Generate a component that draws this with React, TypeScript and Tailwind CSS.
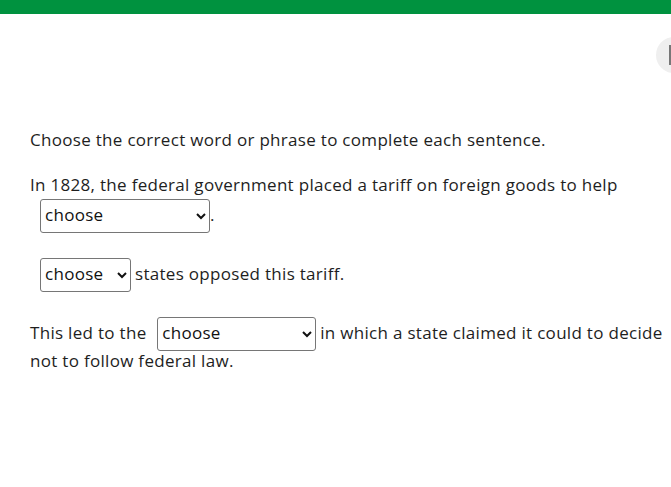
import React from 'react';

const selectClass =
    "inline-block h-[34px] border border-[#767676] rounded-[3px] bg-white pl-0 pb-[3px] text-[17px] text-[#111] align-middle";

export default function App() {
    return (
        <div className="relative w-[671px] h-[487px] overflow-hidden bg-white text-[#1e1e1e] font-['Open_Sans',sans-serif] text-[17px]">
            <div className="h-[14px] bg-[#00923f]" />

            {/* side toggle, half off screen */}
            <div className="absolute left-[656px] top-[37px] w-[36px] h-[36px] rounded-full bg-[#efefef]">
                <div className="absolute left-[13px] top-[8px] w-[3px] h-[20px] bg-[#777]" />
            </div>

            <div className="pl-[30px] pr-[6px] pt-[112px] leading-[28px] tracking-[0.3px]">
                <p className="mb-[17px]">Choose the correct word or phrase to complete each sentence.</p>

                <p className="mb-[25px]">
                    In 1828, the federal government placed a tariff on foreign goods to help{' '}
                    <select className={`${selectClass} w-[170px] ml-[10px]`} defaultValue="">
                        <option value="">choose</option>
                        <option>protect northern factories</option>
                        <option>southern farmers</option>
                    </select>
                    .
                </p>

                <p className="mb-[25px]">
                    <select className={`${selectClass} w-[91px] ml-[10px] mr-[4px]`} defaultValue="">
                        <option value="">choose</option>
                        <option>Northern</option>
                        <option>Southern</option>
                    </select>
                    states opposed this tariff.
                </p>

                <p className="leading-[20px]">
                    This led to the{' '}
                    <select className={`${selectClass} w-[159px] ml-[6px] mr-[4px]`} defaultValue="">
                        <option value="">choose</option>
                        <option>Nullification Crisis</option>
                        <option>Trail of Tears</option>
                    </select>
                    in which a state claimed it could to decide not to follow federal law.
                </p>
            </div>
        </div>
    );
}
